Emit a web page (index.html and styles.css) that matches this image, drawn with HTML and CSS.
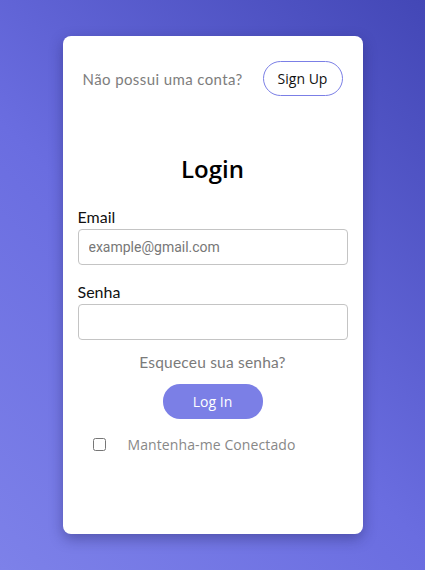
FILE: index.html
```html
<!DOCTYPE html>
<html lang="pt-BR">
<head>
<meta charset="utf-8">
<title>Login</title>
<link rel="stylesheet" href="styles.css">
</head>
<body>
<main class="page">
  <section class="card">
    <div class="top-row">
      <span class="no-account">Não possui uma conta?</span>
      <button class="signup-btn" type="button">Sign Up</button>
    </div>
    <h1 class="title">Login</h1>
    <form class="form">
      <label class="field-label" for="email">Email</label>
      <input class="field-input" id="email" type="email" placeholder="example@gmail.com">
      <label class="field-label field-label-2" for="senha">Senha</label>
      <input class="field-input" id="senha" type="password">
      <a class="forgot" href="#">Esqueceu sua senha?</a>
      <button class="login-btn" type="button">Log In</button>
      <label class="remember">
        <input class="remember-box" type="checkbox">
        <span class="remember-text">Mantenha-me Conectado</span>
      </label>
    </form>
  </section>
</main>
</body>
</html>
```

FILE: styles.css
```css
* { box-sizing: border-box; }

html, body {
  margin: 0;
  padding: 0;
  height: 100%;
}

body {
  background: linear-gradient(45deg, #7d81e9 0%, #6a6de0 45%, #4347b6 100%);
  font-family: "Lato", "Open Sans", sans-serif;
}

.page {
  height: 570px;
  display: flex;
  align-items: center;
  justify-content: center;
}

.card {
  width: 300px;
  height: 498px;
  background: #fff;
  border-radius: 8px;
  box-shadow: 0 5px 14px rgba(30, 30, 90, 0.4);
  padding: 25px 15px;
  display: flex;
  flex-direction: column;
}

.top-row {
  display: flex;
  align-items: center;
  justify-content: space-between;
  padding: 0 5px;
  height: 35px;
}

.no-account {
  font-family: "Lato", sans-serif;
  font-size: 15px;
  color: #7d7d7d;
  letter-spacing: 0.4px;
}

.signup-btn {
  width: 80px;
  height: 35px;
  border: 1px solid #7b7fe6;
  border-radius: 18px;
  background: #fff;
  color: #111;
  font-family: "Open Sans", sans-serif;
  font-size: 14px;
  padding: 0;
}

.title {
  margin: 55px 0 0;
  height: 36px;
  line-height: 36px;
  text-align: center;
  font-family: "Open Sans", sans-serif;
  font-weight: 600;
  font-size: 24px;
  color: #000;
}

.form {
  display: flex;
  flex-direction: column;
  margin-top: 19px;
}

.field-label {
  font-family: "Lato", sans-serif;
  font-size: 16px;
  line-height: 22px;
  height: 22px;
  color: #111;
  margin-bottom: 1px;
}

.field-label-2 { margin-top: 16px; }

.field-input {
  width: 270px;
  height: 36px;
  border: 1px solid #c4c4c4;
  border-radius: 4px;
  padding: 0 10px;
  font-family: "Roboto", sans-serif;
  font-size: 14px;
  color: #333;
  outline: none;
}

.field-input::placeholder { color: #777; }

.forgot {
  margin-top: 11px;
  line-height: 22px;
  height: 22px;
  text-align: center;
  font-family: "Lato", sans-serif;
  font-size: 15.5px;
  color: #7a7a7a;
  text-decoration: none;
  letter-spacing: 0.2px;
}

.login-btn {
  align-self: center;
  margin-top: 11px;
  width: 100px;
  height: 35px;
  border: none;
  border-radius: 17px;
  background: #7b7fe6;
  color: #fff;
  font-family: "Open Sans", sans-serif;
  font-size: 14px;
  padding: 0;
}

.remember {
  margin-top: 15px;
  height: 20px;
  display: flex;
  align-items: center;
  padding-left: 15px;
}

.remember-box {
  margin: 0;
  width: 13px;
  height: 13px;
}

.remember-text {
  margin-left: 22px;
  font-family: "Open Sans", sans-serif;
  font-size: 14px;
  letter-spacing: 0.1px;
  color: #888;
}
```
